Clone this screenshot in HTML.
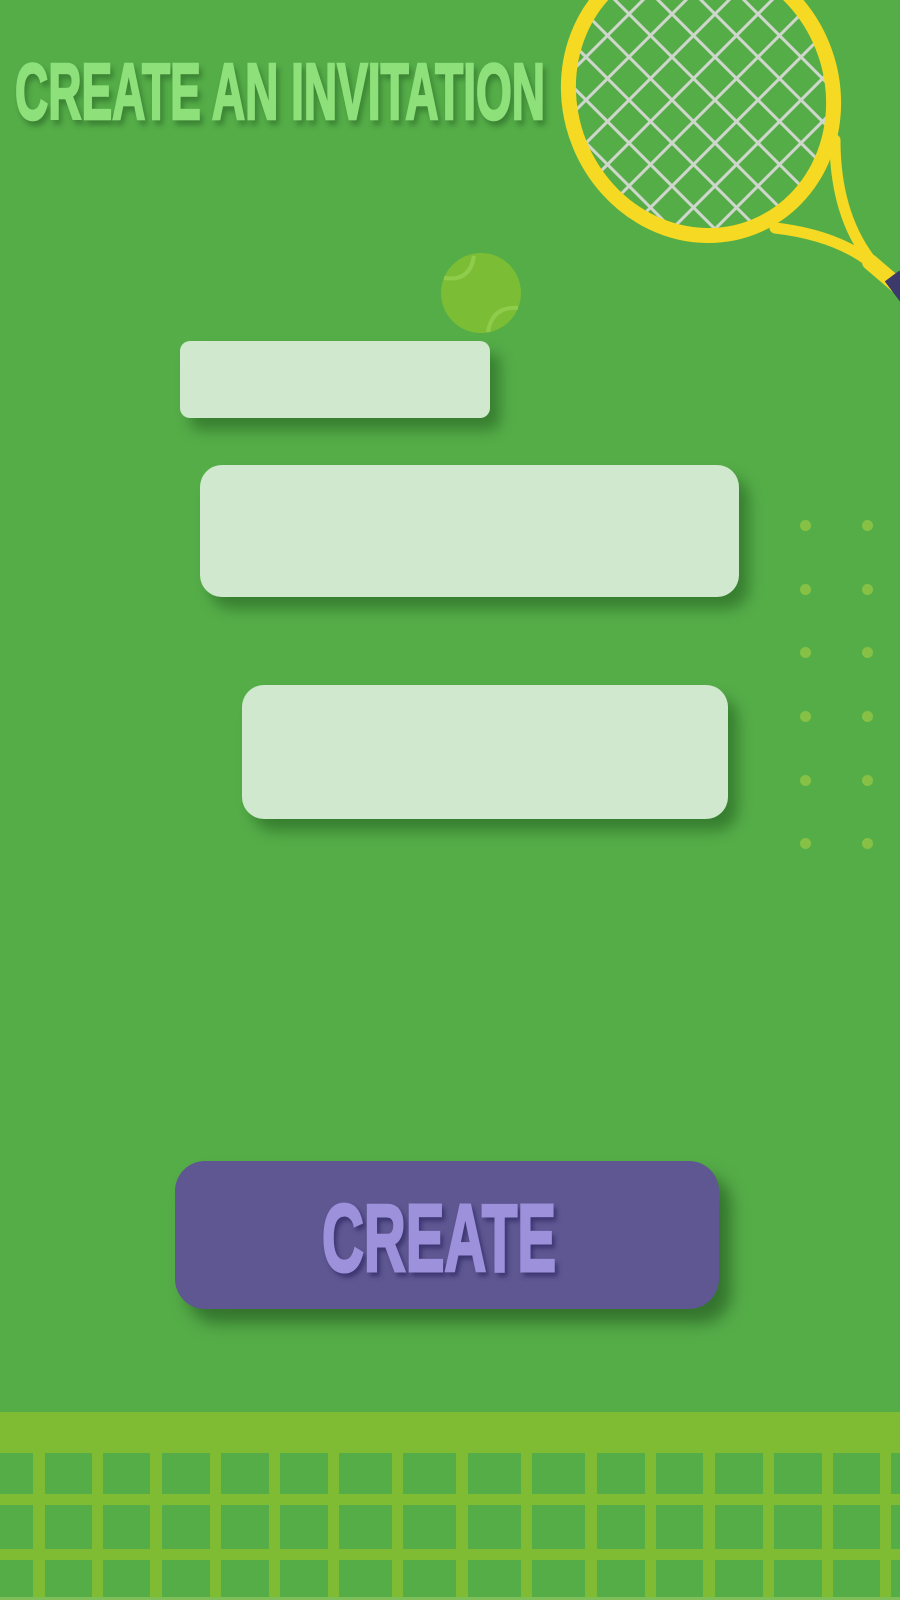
<!DOCTYPE html>
<html><head><meta charset="utf-8"><style>
html,body{margin:0;padding:0}
body{width:900px;height:1600px;background:#55ad48;position:relative;overflow:hidden;font-family:"Liberation Sans",sans-serif}
.box{position:absolute;background:#d0e8cd;box-shadow:10px 12px 14px rgba(20,70,20,.45)}
.dot{position:absolute;width:11px;height:11px;border-radius:50%;background:#86c146}
</style></head><body>
<svg width="900" height="1600" style="position:absolute;left:0;top:0">
  <defs>
    <filter id="ts" x="-5%" y="-20%" width="110%" height="150%"><feDropShadow dx="3" dy="5" stdDeviation="3" flood-color="#2f6f2a" flood-opacity="0.7"/></filter>
    <clipPath id="net"><ellipse cx="701" cy="95" rx="124" ry="135" transform="rotate(-22 701 95)"/></clipPath>
  </defs>
  <text x="15" y="119" font-family="Liberation Sans Narrow, Liberation Sans, sans-serif" font-weight="bold" font-size="80" fill="#8ee07a" stroke="#8ee07a" stroke-width="2.5" textLength="530" lengthAdjust="spacingAndGlyphs" filter="url(#ts)">CREATE AN INVITATION</text>
  <g clip-path="url(#net)" stroke="#cfd6cc" stroke-width="3">
    <line x1="200" y1="-200" x2="700" y2="300"/><line x1="243" y1="-200" x2="743" y2="300"/><line x1="286" y1="-200" x2="786" y2="300"/><line x1="329" y1="-200" x2="829" y2="300"/><line x1="372" y1="-200" x2="872" y2="300"/><line x1="415" y1="-200" x2="915" y2="300"/><line x1="458" y1="-200" x2="958" y2="300"/><line x1="501" y1="-200" x2="1001" y2="300"/><line x1="544" y1="-200" x2="1044" y2="300"/><line x1="587" y1="-200" x2="1087" y2="300"/><line x1="630" y1="-200" x2="1130" y2="300"/><line x1="673" y1="-200" x2="1173" y2="300"/><line x1="716" y1="-200" x2="1216" y2="300"/>
    <line x1="300" y1="300" x2="800" y2="-200"/><line x1="343" y1="300" x2="843" y2="-200"/><line x1="386" y1="300" x2="886" y2="-200"/><line x1="429" y1="300" x2="929" y2="-200"/><line x1="472" y1="300" x2="972" y2="-200"/><line x1="515" y1="300" x2="1015" y2="-200"/><line x1="558" y1="300" x2="1058" y2="-200"/><line x1="601" y1="300" x2="1101" y2="-200"/><line x1="644" y1="300" x2="1144" y2="-200"/><line x1="687" y1="300" x2="1187" y2="-200"/><line x1="730" y1="300" x2="1230" y2="-200"/><line x1="773" y1="300" x2="1273" y2="-200"/>
  </g>
  <path d="M775 228 Q835 235 870 262 M835 140 Q835 215 872 262" stroke="#f6d923" stroke-width="11" fill="none" stroke-linecap="round"/>
  <path d="M870 262 L905 292" stroke="#f6d923" stroke-width="16" stroke-linecap="round"/>
  <path d="M892 276 L910 300" stroke="#3c3a6b" stroke-width="18"/>
  <ellipse cx="701" cy="95" rx="131" ry="142" transform="rotate(-22 701 95)" fill="none" stroke="#f6d923" stroke-width="15"/>
  <circle cx="481" cy="293" r="40" fill="#7cbd36"/>
  <path d="M444 278 Q470 282 474 256 M518 308 Q492 306 488 332" stroke="#8fcc4c" stroke-width="4" fill="none"/>
  <rect x="0" y="1412" width="900" height="41" fill="#80bc33"/>
  <rect x="0" y="1494" width="900" height="11" fill="#80bc33"/>
  <rect x="0" y="1549" width="900" height="11" fill="#80bc33"/>
  <g fill="#80bc33">
    <rect x="33" y="1453" width="12" height="147"/><rect x="92" y="1453" width="11" height="147"/><rect x="150" y="1453" width="12" height="147"/><rect x="210" y="1453" width="11" height="147"/><rect x="269" y="1453" width="11" height="147"/><rect x="328" y="1453" width="11" height="147"/><rect x="392" y="1453" width="11" height="147"/><rect x="456" y="1453" width="12" height="147"/><rect x="521" y="1453" width="11" height="147"/><rect x="585" y="1453" width="12" height="147"/><rect x="645" y="1453" width="11" height="147"/><rect x="703" y="1453" width="12" height="147"/><rect x="763" y="1453" width="11" height="147"/><rect x="822" y="1453" width="11" height="147"/><rect x="880" y="1453" width="11" height="147"/>
  </g>
  <rect x="0" y="1597" width="900" height="3" fill="#7fbf5a"/>
</svg>

<div class="box" style="left:180px;top:341px;width:310px;height:77px;border-radius:10px"></div>
<div class="box" style="left:200px;top:465px;width:539px;height:132px;border-radius:22px"></div>
<div class="box" style="left:242px;top:685px;width:486px;height:134px;border-radius:22px"></div>

<div class="dot" style="left:800px;top:520px"></div><div class="dot" style="left:862px;top:520px"></div>
<div class="dot" style="left:800px;top:584px"></div><div class="dot" style="left:862px;top:584px"></div>
<div class="dot" style="left:800px;top:647px"></div><div class="dot" style="left:862px;top:647px"></div>
<div class="dot" style="left:800px;top:711px"></div><div class="dot" style="left:862px;top:711px"></div>
<div class="dot" style="left:800px;top:775px"></div><div class="dot" style="left:862px;top:775px"></div>
<div class="dot" style="left:800px;top:838px"></div><div class="dot" style="left:862px;top:838px"></div>

<div style="position:absolute;left:175px;top:1161px;width:544px;height:148px;border-radius:30px;background:#5f5791;box-shadow:12px 14px 16px rgba(20,60,20,.5)"></div>
<svg width="900" height="1600" style="position:absolute;left:0;top:0;pointer-events:none">
  <defs><filter id="bs2" x="-5%" y="-20%" width="115%" height="150%"><feDropShadow dx="3" dy="4" stdDeviation="2.5" flood-color="#3a3070" flood-opacity="0.95"/></filter></defs>
  <text x="322" y="1271" font-family="Liberation Sans Narrow, Liberation Sans, sans-serif" font-weight="bold" font-size="96" fill="#9d91dc" stroke="#9d91dc" stroke-width="3" textLength="234" lengthAdjust="spacingAndGlyphs" filter="url(#bs2)">CREATE</text>
</svg>
</body></html>
